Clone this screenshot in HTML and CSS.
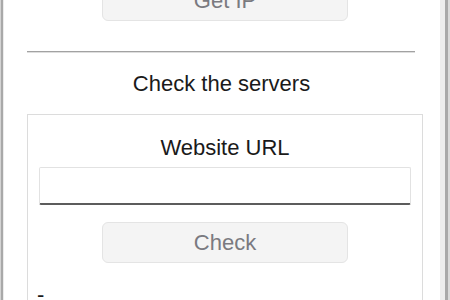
FILE: index.html
```html
<!DOCTYPE html>
<html lang="en">
<head>
    <meta charset="UTF-8">
    <meta name="viewport" content="width=device-width, initial-scale=1.0">
    <title>Server Tools</title>
    <link rel="stylesheet" href="styles.css">
</head>
<body>
    <div class="window">
        <button class="btn" disabled>Get IP</button>

        <div class="separator"></div>

        <div class="section-title">Check the servers</div>

        <!-- Group box -->
        <div class="group-box">
            <div class="field-label">Website URL</div>
            <input type="text" class="text-input">
            <button class="btn" disabled>Check</button>
            <div class="result">-</div>
        </div>
    </div>
</body>
</html>
```

FILE: styles.css
```css
* {
    margin: 0;
    padding: 0;
    box-sizing: border-box;
    font-family: 'Liberation Sans', Arial, sans-serif;
}

html, body {
    width: 450px;
    height: 300px;
    overflow: hidden;
    background-color: #fff;
}

.window {
    height: 300px;
    overflow: hidden;
    display: flex;
    flex-direction: column;
    align-items: flex-start;
    box-shadow:
        inset 1px 0 #d4d4d4,
        inset 3px 0 #a9a9a9,
        inset 4px 0 #ececec,
        inset -2px 0 #dadada,
        inset -5px 0 #a9a9a9,
        inset -10px 0 #ededed;
}

.window > *,
.group-box > * {
    flex-shrink: 0;
}

.btn {
    display: block;
    width: 246px;
    height: 41px;
    margin-left: 102px;
    background-color: #f4f4f4;
    border: 1px solid #e4e4e4;
    border-radius: 6px;
    color: #7a7a80;
    font-size: 22px;
}

.window > .btn {
    margin-top: -20px;
}

.separator {
    width: 388px;
    margin-left: 27px;
    margin-top: 30px;
    border-top: 1px solid #a2a2a2;
    border-bottom: 1px solid #dedede;
}

.section-title {
    align-self: stretch;
    margin-top: 18px;
    padding-right: 7px;
    font-size: 22px;
    line-height: 26px;
    text-align: center;
    color: #1a1a1a;
}

.group-box {
    width: 396px;
    margin-left: 27px;
    margin-top: 17px;
    flex-grow: 1;
    border: 1px solid #dcdcdc;
    border-bottom: none;
    padding: 20px 11px 0;
    display: flex;
    flex-direction: column;
}

.field-label {
    font-size: 22px;
    line-height: 26px;
    text-align: center;
    color: #1a1a1a;
}

.text-input {
    margin-top: 6px;
    height: 38px;
    width: 100%;
    border: 1px solid #e2e2e2;
    border-bottom: 2px solid #5c5c5c;
    border-radius: 2px;
    background: #fff;
    outline: none;
}

.group-box .btn {
    margin-top: 17px;
    margin-left: 63px;
}

.result {
    margin-top: 19px;
    margin-left: -2px;
    font-size: 22px;
    line-height: 26px;
    color: #1a1a1a;
}
```
